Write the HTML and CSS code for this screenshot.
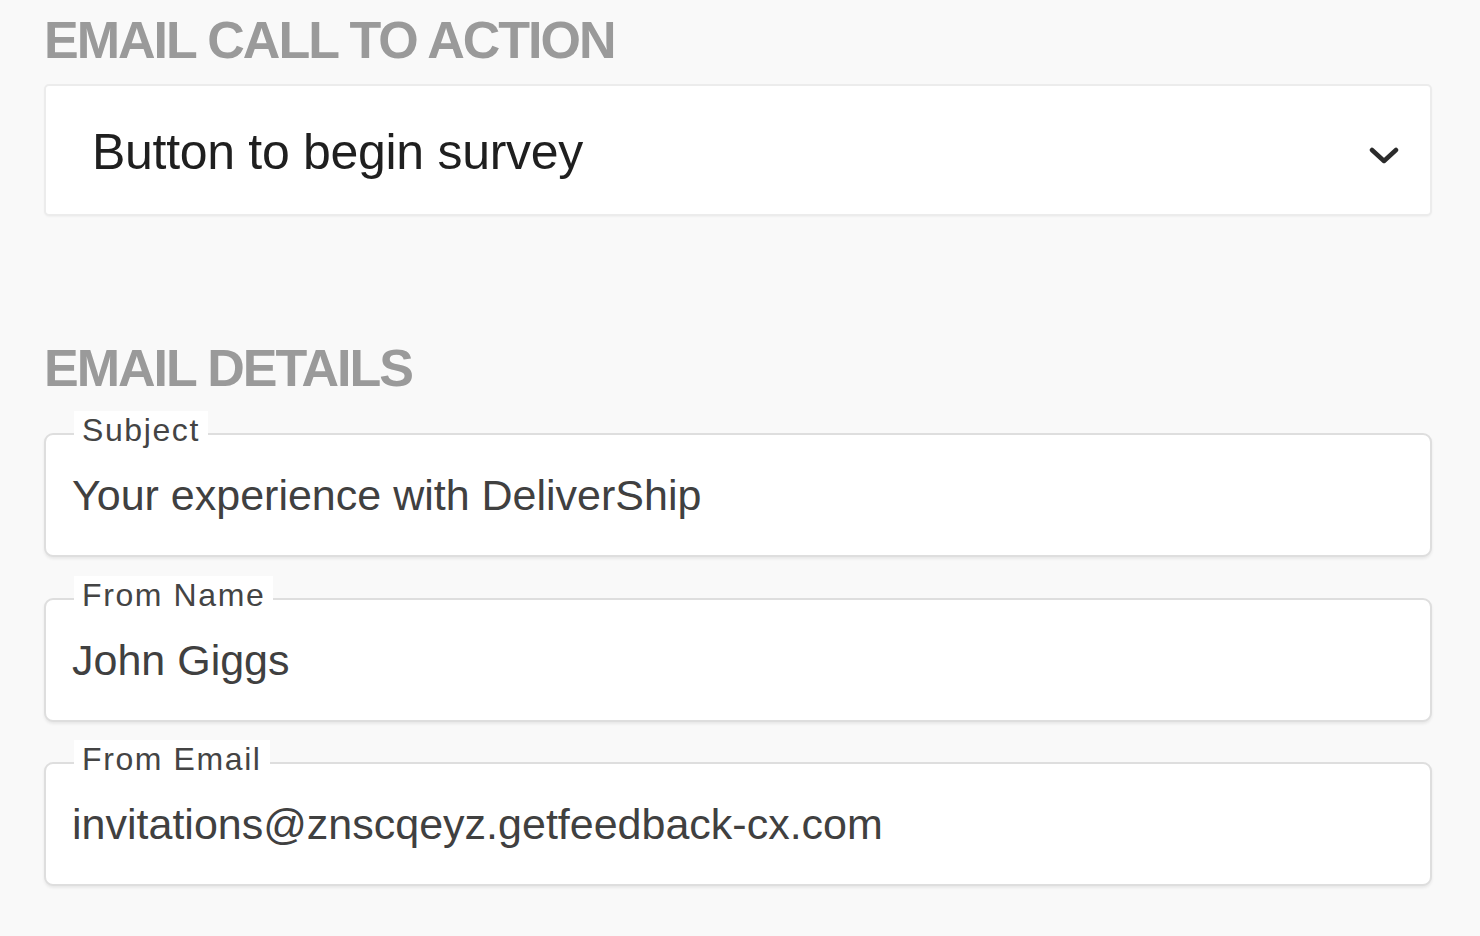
FILE: index.html
```html
<!DOCTYPE html>
<html lang="en">
<head>
<meta charset="utf-8">
<title>Email settings</title>
<link rel="stylesheet" href="styles.css">
</head>
<body>
<main class="panel">
  <section class="group group-cta">
    <h2 class="group-title">EMAIL CALL TO ACTION</h2>
    <div class="select">
      <span class="select-value">Button to begin survey</span>
      <svg class="chevron" width="30" height="20" viewBox="0 0 30 20" aria-hidden="true">
        <polyline points="3,4 15,15 27,4" fill="none" stroke="#2b2b2b" stroke-width="4.5" stroke-linecap="round" stroke-linejoin="round"/>
      </svg>
    </div>
  </section>
  <section class="group group-details">
    <h2 class="group-title">EMAIL DETAILS</h2>
    <div class="fields">
      <div class="field">
        <span class="field-label">Subject</span>
        <div class="field-value">Your experience with DeliverShip</div>
      </div>
      <div class="field">
        <span class="field-label">From Name</span>
        <div class="field-value">John Giggs</div>
      </div>
      <div class="field">
        <span class="field-label">From Email</span>
        <div class="field-value">invitations@znscqeyz.getfeedback-cx.com</div>
      </div>
    </div>
  </section>
</main>
</body>
</html>
```

FILE: styles.css
```css
html, body {
  margin: 0;
  padding: 0;
  background: #f9f9f9;
}

body {
  font-family: "Liberation Sans", Arial, Helvetica, sans-serif;
  width: 1480px;
  height: 936px;
  overflow: hidden;
}

.panel {
  padding: 10px 48px 0 44px;
}

.group-title {
  margin: 0;
  font-size: 52px;
  line-height: 60px;
  font-weight: 700;
  letter-spacing: -2px;
  color: #9a9a9a;
}

.select {
  margin-top: 14px;
  height: 132px;
  box-sizing: border-box;
  display: flex;
  align-items: center;
  justify-content: space-between;
  background: #ffffff;
  border: 2px solid #ececec;
  border-radius: 5px;
  box-shadow: 0 1px 2px rgba(0, 0, 0, 0.04);
  padding: 0 31px 0 46px;
}

.select-value {
  font-size: 50px;
  letter-spacing: -0.3px;
  color: #1f1f1f;
  line-height: 60px;
  padding-top: 4px;
}

.chevron {
  display: block;
  margin-top: 12px;
}

.group-details {
  margin-top: 122px;
}

.fields {
  margin-top: 35px;
  display: flex;
  flex-direction: column;
  gap: 40.5px;
}

.field {
  position: relative;
  height: 124px;
  box-sizing: border-box;
  background: #ffffff;
  border: 2px solid #dedede;
  border-radius: 9px;
  box-shadow: 0 2px 3px rgba(0, 0, 0, 0.07);
  display: flex;
  align-items: center;
  padding: 0 26px;
}

.field-label {
  position: absolute;
  top: -24px;
  left: 28px;
  background: #ffffff;
  padding: 0 8px;
  font-size: 32px;
  line-height: 38px;
  letter-spacing: 1.6px;
  color: #444444;
}

.field-value {
  font-size: 43px;
  line-height: 50px;
  color: #404040;
  letter-spacing: 0px;
}
```
